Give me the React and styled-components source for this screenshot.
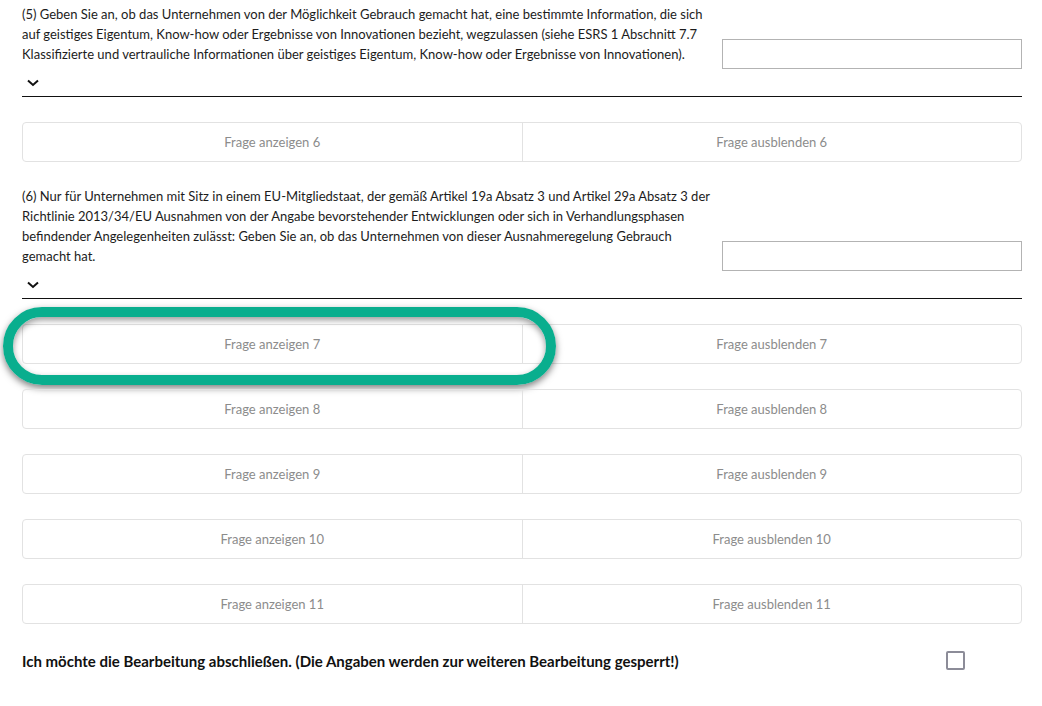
import React from "react";
import styled, { createGlobalStyle } from "styled-components";

const GlobalStyle = createGlobalStyle`
  html, body {
    margin: 0;
    padding: 0;
    background: #fff;
  }
  body {
    font-family: Lato, "Open Sans", Arial, sans-serif;
    color: #222;
  }
`;

const Page = styled.div`
  width: 1000px;
  padding: 4px 20px 0 22px;
  display: flex;
  flex-direction: column;
`;

const Question = styled.section`
  display: flex;
  flex-direction: column;
  margin-bottom: 25px;
`;

const QuestionRow = styled.div`
  display: flex;
  align-items: flex-end;
  justify-content: space-between;
`;

const QuestionText = styled.p`
  margin: 0;
  padding-bottom: 5px;
  width: 690px;
  font-size: 13px;
  line-height: 20px;
  color: #1c1c1c;
`;

const Answer = styled.input`
  width: 300px;
  height: 30px;
  box-sizing: border-box;
  border: 1px solid #b3b3b3;
  border-radius: 0;
  outline: none;
  padding: 0 8px;
  font-family: inherit;
`;

const Toggle = styled.div`
  display: flex;
  align-items: center;
  height: 27px;
  padding-left: 5px;
  border-bottom: 1px solid #111;
`;

const ButtonRow = styled.div`
  position: relative;
  display: flex;
  height: 40px;
  box-sizing: border-box;
  border: 1px solid #e2e2e2;
  border-radius: 4px;
  margin-bottom: ${(p) => p.$gap}px;
`;

const RowButton = styled.button`
  flex: 1;
  border: none;
  background: transparent;
  font-family: inherit;
  font-size: 13px;
  color: #8c8c8c;
  cursor: pointer;
  & + & {
    border-left: 1px solid #e2e2e2;
  }
`;

const Highlight = styled.div`
  position: absolute;
  left: -20px;
  top: -18px;
  width: 553px;
  height: 78px;
  box-sizing: border-box;
  border: 10px solid #09ae8e;
  border-radius: 40px;
  box-shadow: 0 3px 7px rgba(0, 0, 0, 0.5), inset 0 3px 6px rgba(0, 0, 0, 0.4);
  pointer-events: none;
`;

const Finish = styled.label`
  display: flex;
  align-items: center;
  justify-content: space-between;
  padding: 2px 57px 0 0;
  font-size: 15px;
  font-weight: 700;
  color: #111;
`;

const Checkbox = styled.span`
  width: 19px;
  height: 19px;
  box-sizing: border-box;
  border: 2px solid #8c8c98;
  border-radius: 2px;
`;

const Chevron = () => (
  <svg width="12" height="8" viewBox="0 0 12 8">
    <polyline points="1,1.5 6,6 11,1.5" fill="none" stroke="#111" strokeWidth="2" />
  </svg>
);

const questions = [
  {
    id: 5,
    text: "(5) Geben Sie an, ob das Unternehmen von der Möglichkeit Gebrauch gemacht hat, eine bestimmte Information, die sich auf geistiges Eigentum, Know-how oder Ergebnisse von Innovationen bezieht, wegzulassen (siehe ESRS 1 Abschnitt 7.7 Klassifizierte und vertrauliche Informationen über geistiges Eigentum, Know-how oder Ergebnisse von Innovationen).",
    after: [6],
  },
  {
    id: 6,
    text: "(6) Nur für Unternehmen mit Sitz in einem EU-Mitgliedstaat, der gemäß Artikel 19a Absatz 3 und Artikel 29a Absatz 3 der Richtlinie 2013/34/EU Ausnahmen von der Angabe bevorstehender Entwicklungen oder sich in Verhandlungsphasen befindender Angelegenheiten zulässt: Geben Sie an, ob das Unternehmen von dieser Ausnahmeregelung Gebrauch gemacht hat.",
    after: [7, 8, 9, 10, 11],
  },
];

export default function App() {
  return (
    <>
      <GlobalStyle />
      <Page>
        {questions.map((q, qi) => (
          <React.Fragment key={q.id}>
            <Question>
              <QuestionRow>
                <QuestionText>{q.text}</QuestionText>
                <Answer type="text" />
              </QuestionRow>
              <Toggle>
                <Chevron />
              </Toggle>
            </Question>
            {q.after.map((n, i) => (
              <ButtonRow
                key={n}
                $gap={i === q.after.length - 1 && qi < questions.length - 1 ? 24 : 25}
              >
                <RowButton>Frage anzeigen {n}</RowButton>
                <RowButton>Frage ausblenden {n}</RowButton>
                {n === 7 && <Highlight />}
              </ButtonRow>
            ))}
          </React.Fragment>
        ))}
        <Finish>
          Ich möchte die Bearbeitung abschließen. (Die Angaben werden zur weiteren Bearbeitung gesperrt!)
          <Checkbox />
        </Finish>
      </Page>
    </>
  );
}
